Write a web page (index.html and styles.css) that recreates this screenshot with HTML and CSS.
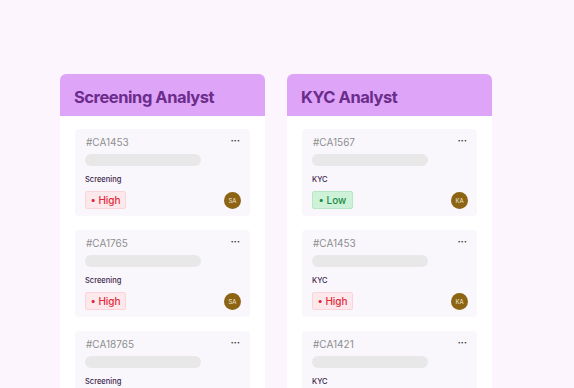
FILE: index.html
```html
<!DOCTYPE html>
<html>
<head>
<meta charset="utf-8">
<link rel="stylesheet" href="styles.css">
</head>
<body>
<div class="board">
  <section class="column">
    <header class="col-head">Screening Analyst</header>
    <div class="col-body">
      <div class="card">
        <div class="card-top"><span class="cid">#CA1453</span><span class="more">•••</span></div>
        <div class="skel"></div>
        <div class="cat">Screening</div>
        <div class="card-foot"><span class="badge high">• High</span><span class="avatar">SA</span></div>
      </div>
      <div class="card">
        <div class="card-top"><span class="cid">#CA1765</span><span class="more">•••</span></div>
        <div class="skel"></div>
        <div class="cat">Screening</div>
        <div class="card-foot"><span class="badge high">• High</span><span class="avatar">SA</span></div>
      </div>
      <div class="card">
        <div class="card-top"><span class="cid">#CA18765</span><span class="more">•••</span></div>
        <div class="skel"></div>
        <div class="cat">Screening</div>
        <div class="card-foot"><span class="badge high">• High</span><span class="avatar">SA</span></div>
      </div>
    </div>
  </section>
  <section class="column">
    <header class="col-head">KYC Analyst</header>
    <div class="col-body">
      <div class="card">
        <div class="card-top"><span class="cid">#CA1567</span><span class="more">•••</span></div>
        <div class="skel"></div>
        <div class="cat">KYC</div>
        <div class="card-foot"><span class="badge low">• Low</span><span class="avatar">KA</span></div>
      </div>
      <div class="card">
        <div class="card-top"><span class="cid">#CA1453</span><span class="more">•••</span></div>
        <div class="skel"></div>
        <div class="cat">KYC</div>
        <div class="card-foot"><span class="badge high">• High</span><span class="avatar">KA</span></div>
      </div>
      <div class="card">
        <div class="card-top"><span class="cid">#CA1421</span><span class="more">•••</span></div>
        <div class="skel"></div>
        <div class="cat">KYC</div>
        <div class="card-foot"><span class="badge low">• Low</span><span class="avatar">KA</span></div>
      </div>
    </div>
  </section>
</div>
</body>
</html>
```

FILE: styles.css
```css
* { box-sizing: border-box; }
html, body { margin: 0; height: 100%; overflow: hidden; }
body {
  background: #fcf5fd;
  font-family: Inter, "Open Sans", sans-serif;
}
.board {
  display: flex;
  gap: 22px;
  padding: 74px 0 0 60px;
  height: 100%;
}
.column {
  width: 205px;
  background: #ffffff;
  border-radius: 6px 6px 0 0;
  display: flex;
  flex-direction: column;
}
.col-head {
  flex: none;
  height: 42px;
  background: #dea4f8;
  border-radius: 6px 6px 0 0;
  padding: 12px 0 0 14px;
  font-size: 16.5px;
  font-weight: 700;
  letter-spacing: -0.45px;
  color: #6b2c8c;
  line-height: 22px;
}
.col-body {
  padding: 13px 15px 0 15px;
  display: flex;
  flex-direction: column;
  gap: 14px;
}
.card {
  height: 87px;
  flex: none;
  background: #f9f7fc;
  border-radius: 4px;
  padding: 6px 10px 0 10px;
  display: flex;
  flex-direction: column;
}
.card-top {
  display: flex;
  justify-content: space-between;
  align-items: center;
  height: 14px;
  padding-left: 1px;
}
.cid {
  font-size: 10px;
  color: #8e8e8e;
  line-height: 14px;
}
.more {
  font-size: 5px;
  letter-spacing: 0.3px;
  color: #333;
  margin-top: -5px;
}
.skel {
  margin-top: 5px;
  width: 116px;
  height: 12px;
  border-radius: 6px;
  background: #e8e8e8;
}
.cat {
  margin-top: 8px;
  font-size: 7.5px;
  font-weight: 500;
  color: #3d1e4c;
  line-height: 12px;
}
.card-foot {
  margin-top: 5px;
  display: flex;
  justify-content: space-between;
  align-items: center;
  height: 18px;
}
.badge {
  height: 18px;
  width: 41px;
  border-radius: 2px;
  font-size: 10px;
  font-weight: 500;
  white-space: nowrap;
  display: flex;
  align-items: center;
  justify-content: center;
}
.badge.high {
  background: #fde9ec;
  border: 1px solid #fad4d8;
  color: #e02b3a;
}
.badge.low {
  background: #cdf2d8;
  border: 1px solid #b6e8c5;
  color: #1e8a45;
}
.avatar {
  width: 17px;
  height: 17px;
  margin-right: -1px;
  margin-top: 1px;
  border-radius: 50%;
  background: #8c6414;
  color: #f4ead6;
  font-size: 6px;
  display: flex;
  align-items: center;
  justify-content: center;
}
```
